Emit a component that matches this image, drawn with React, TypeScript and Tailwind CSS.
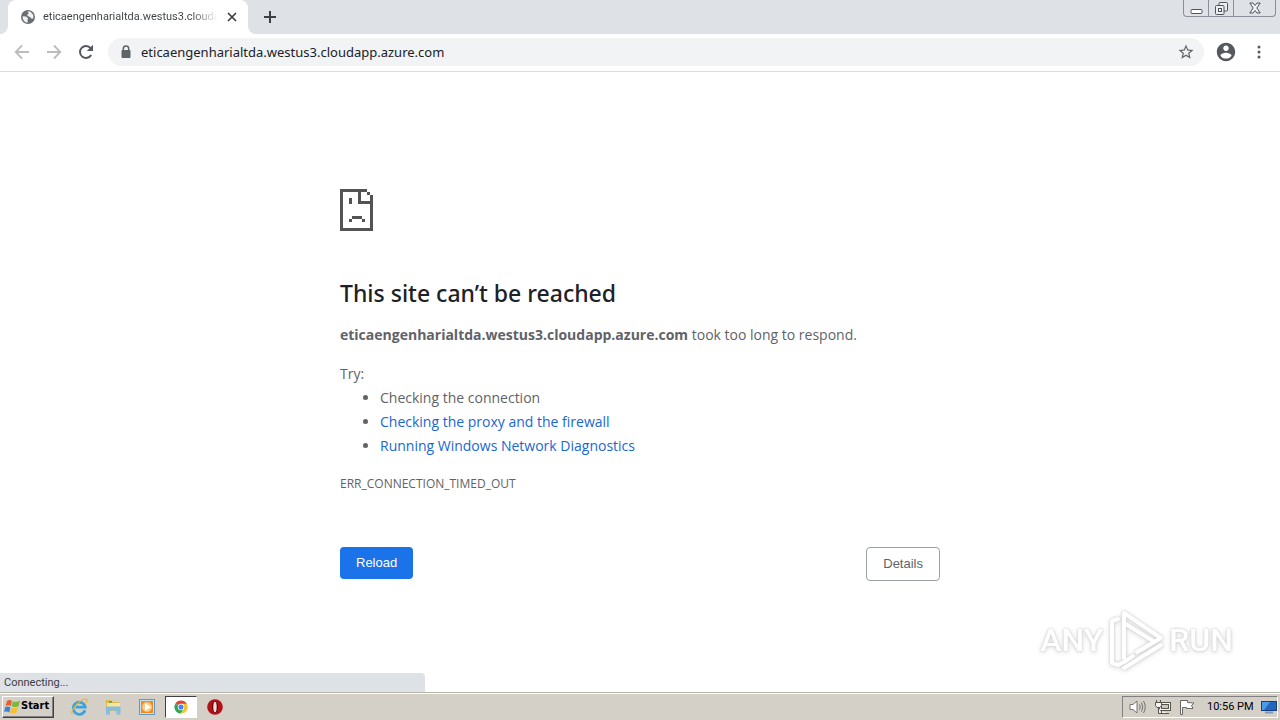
import type { ReactNode } from "react";

function GlobeIcon() {
  return (
    <svg viewBox="0 0 16 16" className="size-4 shrink-0" aria-hidden="true">
      <circle cx="8" cy="8" r="7" fill="#6a6d72" />
      <path d="M2.6 7.2 6 7.6 8.2 9.4 7.4 11 8 13.6C4.800 13.600 2.400 11 2.600 7.200ZM7.400 2.400 10.300 2.600 13.300 6 13.400 9.400 11 9.600 10 8 7.600 7 7.200 5.600 8.800 4.800Z" fill="#fff" opacity=".9" />
    </svg>
  );
}

function TabStrip() {
  return (
    <header className="flex h-[34px] items-start bg-[#dee1e6] pl-2">
      <div className="relative flex h-[34px] w-60 items-center rounded-t-lg bg-white pl-3 pr-2">
        <svg viewBox="0 0 8 8" className="absolute -left-2 bottom-0 size-2" aria-hidden="true">
          <path d="M8 0V8H0A8 8 0 0 0 8 0Z" fill="#fff" />
        </svg>
        <svg viewBox="0 0 8 8" className="absolute -right-2 bottom-0 size-2" aria-hidden="true">
          <path d="M0 0V8H8A8 8 0 0 1 0 0Z" fill="#fff" />
        </svg>
        <GlobeIcon />
        <span className="ml-[7px] w-[175px] overflow-hidden whitespace-nowrap bg-linear-to-r from-[#3c4043] from-85% to-transparent bg-clip-text font-['Roboto',sans-serif] text-[11px] leading-4 text-transparent">
          eticaengenharialtda.westus3.cloudapp.azure.com
        </span>
        <button type="button" aria-label="Close tab" className="ml-1.5 grid size-4 place-items-center">
          <svg viewBox="0 0 10 10" className="size-2.5" stroke="#3c4043" strokeWidth="1.700">
            <path d="M1 1 9 9M9 1 1 9" />
          </svg>
        </button>
      </div>
      <button type="button" aria-label="New tab" className="ml-3.5 mt-[9px] grid size-4 place-items-center">
        <svg viewBox="0 0 12 12" className="size-3" stroke="#3c4043" strokeWidth="2">
          <path d="M6 0V12M0 6H12" />
        </svg>
      </button>
      <div className="ml-auto mr-1 flex h-[17px] rounded-b border border-t-0 border-[#8b8f98]">
        <button type="button" aria-label="Minimize" className="flex w-[25px] items-center justify-center border-r border-[#8b8f98]">
          <svg viewBox="0 0 13 13" className="size-[13px]" fill="#fff" stroke="#50545c">
            <rect x="1" y="7.500" width="11" height="4" rx="1" />
          </svg>
        </button>
        <button type="button" aria-label="Restore" className="flex w-[25px] items-center justify-center border-r border-[#8b8f98]">
          <svg viewBox="0 0 13 13" className="size-[13px]" fill="#eceef2" stroke="#50545c">
            <rect x="4" y=".5" width="8.500" height="8.500" rx="1" />
            <rect x=".5" y="3.500" width="8.500" height="9" rx="1" />
            <rect x="3.500" y="6.500" width="3" height="3" />
          </svg>
        </button>
        <button type="button" aria-label="Close window" className="flex w-[41px] items-center justify-center">
          <svg viewBox="0 0 12 12" className="size-3" fill="#f3f4f7" stroke="#50545c">
            <path d="M.8 1H4L6 3.500 8 1H11.200L7.800 6 11.200 11H8L6 8.500 4 11H.8L4.200 6Z" />
          </svg>
        </button>
      </div>
    </header>
  );
}

function Toolbar() {
  return (
    <nav className="flex h-[38px] items-center border-b border-[#dadce0] bg-white pb-0.5 pl-3">
      <button type="button" aria-label="Back" className="size-5">
        <svg viewBox="0 0 20 20" fill="none" stroke="#babcbe" strokeWidth="1.800">
          <path d="M17 10H4M10 3.500 3.700 10 10 16.500" />
        </svg>
      </button>
      <button type="button" aria-label="Forward" className="ml-3 size-5">
        <svg viewBox="0 0 20 20" fill="none" stroke="#babcbe" strokeWidth="1.800">
          <path d="M3 10H16M10 3.500 16.300 10 10 16.500" />
        </svg>
      </button>
      <button type="button" aria-label="Reload page" className="ml-3 size-5">
        <svg viewBox="0 0 20 20">
          <path d="M15.200 13A6 6 0 1 1 14.600 6.100L16 7.500" fill="none" stroke="#55585c" strokeWidth="2" />
          <path d="M17 2.800V9H10.800Z" fill="#55585c" />
        </svg>
      </button>
      <div className="ml-3 flex h-7 flex-1 items-center rounded-full bg-[#f1f3f4] pl-3 pr-2">
        <svg viewBox="0 0 12 14" className="h-3.5 w-3" aria-hidden="true">
          <path d="M3.300 6V3.800A2.700 2.700 0 0 1 8.700 3.800V6" fill="none" stroke="#5f6368" strokeWidth="1.500" />
          <rect x="1.500" y="5" width="9" height="8" rx="1" fill="#5f6368" />
        </svg>
        <input
          aria-label="Address"
          defaultValue="eticaengenharialtda.westus3.cloudapp.azure.com"
          className="ml-[9px] min-w-0 flex-1 bg-transparent font-['Noto_Sans',sans-serif] text-[13px] leading-5 text-[#202124] outline-none"
        />
        <button type="button" aria-label="Bookmark" className="grid size-5 place-items-center">
          <svg viewBox="0 0 24 24" className="size-[18px]" fill="#5f6368">
            <path d="M22 9.240l-7.190-.62L12 2 9.190 8.630 2 9.240l5.460 4.730L5.820 21 12 17.270 18.180 21l-1.630-7.030L22 9.240zM12 15.400l-3.760 2.270 1-4.280-3.320-2.880 4.380-.38L12 6.100l1.710 4.040 4.380.38-3.320 2.880 1 4.280L12 15.400z" />
          </svg>
        </button>
      </div>
      <button type="button" aria-label="Profile" className="ml-[11px] size-[22px]">
        <svg viewBox="0 0 24 24" fill="#55585c">
          <path d="M12 2C6.480 2 2 6.480 2 12s4.480 10 10 10 10-4.480 10-10S17.520 2 12 2zm0 3c1.660 0 3 1.340 3 3s-1.340 3-3 3-3-1.340-3-3 1.340-3 3-3zm0 14.200c-2.500 0-4.710-1.280-6-3.220.030-1.990 4-3.080 6-3.080 1.990 0 5.970 1.090 6 3.080-1.290 1.940-3.500 3.220-6 3.220z" />
        </svg>
      </button>
      <button type="button" aria-label="Menu" className="ml-3 mr-[11px] size-5">
        <svg viewBox="0 0 20 20" fill="#55585c">
          <circle cx="10" cy="5" r="1.500" />
          <circle cx="10" cy="10" r="1.500" />
          <circle cx="10" cy="15" r="1.500" />
        </svg>
      </button>
    </nav>
  );
}

function SadPage() {
  return (
    <svg viewBox="0 0 33 42" className="h-[42px] w-[33px]" fill="#535353" shapeRendering="crispEdges" aria-hidden="true">
      <path d="M0 0H27V3H3V39H30V15H18V0H21V12H30V6H33V42H0ZM27 3H30V6H27ZM9 9H12V15H9ZM12 27H22V30H12ZM9 30H12V33H9ZM22 30H25V33H22Z" />
    </svg>
  );
}

function Watermark() {
  return (
    <div className="absolute bottom-5 right-[47px] flex items-center gap-1 font-['Roboto',sans-serif] text-[32px] font-medium leading-none text-white [filter:drop-shadow(0_0_1px_#ccc)_drop-shadow(0_1px_2px_#ddd)]">
      <span>ANY</span>
      <svg viewBox="0 0 58 64" className="h-16 w-[58px]" fill="none" stroke="#fff" strokeWidth="4" strokeLinejoin="round" strokeLinecap="round" aria-hidden="true">
        <path d="M17 50V5L54 30 30 44M17 15 46 33M11 11 5 13V55L11 57 17 54 26 48" />
        <path d="M17 60 54 37" />
      </svg>
      <span>RUN</span>
    </div>
  );
}

function ErrorPage() {
  return (
    <main className="relative flex-1 bg-white px-6 pt-[117px] font-['Open_Sans',sans-serif] text-[#5f6368]">
      <div className="mx-auto max-w-[600px]">
        <SadPage />
        <h1 className="mt-12 font-['Noto_Sans',sans-serif] text-[23px] font-medium leading-7 text-[#202124]">This site can’t be reached</h1>
        <div className="text-[14px] leading-6">
          <p className="mt-4">
            <strong className="font-bold">eticaengenharialtda.westus3.cloudapp.azure.com</strong> took too long to respond.
          </p>
          <p className="mt-[15px]">Try:</p>
          <ul className="list-disc pl-10">
            <li>Checking the connection</li>
            <li><a href="#proxy" className="text-[#1967d2]">Checking the proxy and the firewall</a></li>
            <li><a href="#diagnostics" className="text-[#1967d2]">Running Windows Network Diagnostics</a></li>
          </ul>
        </div>
        <p className="mt-4 text-[12px] leading-5">ERR_CONNECTION_TIMED_OUT</p>
        <div className="mt-[53px] flex items-start justify-between font-['Liberation_Sans',sans-serif] text-[13px]">
          <button type="button" className="h-8 rounded bg-[#1a73e8] px-4 text-white">Reload</button>
          <button type="button" className="h-[34px] rounded border border-[#9aa0a6] px-4">Details</button>
        </div>
      </div>
      <Watermark />
      <div role="status" className="absolute bottom-0 left-0 h-[19px] w-[425px] max-w-full rounded-tr bg-[#dee1e6] pl-1 font-['Roboto',sans-serif] text-[11px] leading-5 text-[#3c4043]">
        Connecting...
      </div>
    </main>
  );
}

function TaskButton({ label, active, children }: { label: string; active?: boolean; children: ReactNode }) {
  return (
    <button
      type="button"
      aria-label={label}
      className={
        active
          ? "grid h-[22px] w-8 place-items-center border border-b-white border-l-[#404040] border-r-white border-t-[#404040] bg-white"
          : "grid h-[22px] w-8 place-items-center"
      }
    >
      {children}
    </button>
  );
}

function Taskbar() {
  return (
    <footer className="flex h-7 items-center border-t border-[#b5b2aa] bg-[#d4d0c8] pl-0.5 pr-0.5 font-['Noto_Sans',sans-serif] text-black shadow-[inset_0_1px_0_#fff]">
      <button type="button" className="flex h-[22px] w-[52px] items-center gap-px border border-b-[#404040] border-l-white border-r-[#404040] border-t-white pl-px font-['DejaVu_Sans_Condensed','DejaVu_Sans',sans-serif] text-[11px] font-bold shadow-[inset_-1px_-1px_0_#808080]">
        <svg viewBox="0 0 16 16" className="size-4 shrink-0" aria-hidden="true">
          <path d="M3 2C5 .5 6.500 1 8 2L6.700 7.200C5 6 3.500 6 1.500 7Z" fill="#e8612c" />
          <path d="M9 2.200C11 3.300 13 3 16 1.800L14.400 7.200C12 8.300 10 8.500 7.700 7.300Z" fill="#78b83a" />
          <path d="M1.200 8.200C3 7.300 5 7.400 6.400 8.500L5.200 13.500C3.500 12.300 2 12.400 0 13Z" fill="#3b82d0" />
          <path d="M7.400 8.700C9.500 9.700 11.500 9.400 14 8.300L12.400 13.500C10 14.800 8 14.500 6.100 13.800Z" fill="#f5c02c" />
        </svg>
        Start
      </button>
      <div className="ml-[9px] flex gap-0.5">
        <TaskButton label="Internet Explorer">
          <svg viewBox="0 0 18 18" className="size-[18px]" fill="none">
            <path d="M15 12.200A6 6 0 1 1 15.200 9.200H5.500" stroke="#3aa3df" strokeWidth="2.800" />
            <path d="M2.300 16.500C-.5 12.500 12-.5 16.300 1.300 17.500 2 17 3.500 16 5" stroke="#e6b83a" strokeWidth="1.200" />
          </svg>
        </TaskButton>
        <TaskButton label="File Explorer">
          <svg viewBox="0 0 18 18" className="size-[18px]">
            <path d="M2 2H7L8 4H15.500V13H2Z" fill="#dfb94e" />
            <path d="M3 5H16V12H3Z" fill="#f8e49a" />
            <path d="M2 9.500Q2 8.500 3 8.500H15.500Q16.500 8.500 16.500 9.500V16.500H12.500V12.500H6V16.500H2Z" fill="#83bde0" />
            <path d="M5 3H8V5H5Z" fill="#66aa55" />
          </svg>
        </TaskButton>
        <TaskButton label="Media Player">
          <svg viewBox="0 0 18 18" className="size-[18px]">
            <rect x="1.500" y="1.500" width="15" height="15" fill="#c9e2f5" stroke="#5d9acb" />
            <rect x="3" y="3" width="12" height="12" fill="#f08a18" />
            <circle cx="9" cy="9" r="5" fill="#f9c987" />
            <path d="M7 5 13 9 7 13Z" fill="#fff" />
          </svg>
        </TaskButton>
        <TaskButton label="Chrome" active>
          <svg viewBox="0 0 16 16" className="size-3.5">
            <path d="M8 8 1.500 4.200A7.500 7.500 0 0 1 14.500 4.200Z" fill="#e04535" />
            <path d="M8 8 1.500 4.200A7.500 7.500 0 0 0 8 15.500L11 10Z" fill="#33a653" />
            <path d="M8 4.200H14.500A7.500 7.500 0 0 1 8 15.500L11.300 10Z" fill="#f9c22b" />
            <circle cx="8" cy="8" r="3.700" fill="#fff" />
            <circle cx="8" cy="8" r="2.900" fill="#4285f4" />
          </svg>
        </TaskButton>
        <TaskButton label="Opera">
          <svg viewBox="0 0 16 16" className="size-4">
            <circle cx="8" cy="8" r="7.800" fill="#b50f18" />
            <ellipse cx="8" cy="8" rx="3" ry="6" fill="#5a0508" />
            <ellipse cx="8" cy="8" rx="1.700" ry="5.300" fill="#f5dada" />
          </svg>
        </TaskButton>
      </div>
      <div className="ml-auto flex h-[22px] items-center gap-2 border border-b-white border-l-[#808080] border-r-white border-t-[#808080] pl-1.5">
        <svg viewBox="0 0 18 16" className="h-4 w-[18px]" fill="#fff" stroke="#74736f" aria-label="Volume">
          <path d="M1 5.500H4L8 2V14L4 10.500H1Z" />
          <path d="M10.500 5.500Q12 8 10.500 10.500M12.500 3.500Q15 8 12.500 12.500M14.500 2Q18 8 14.500 14" fill="none" />
        </svg>
        <svg viewBox="0 0 16 16" className="size-4" fill="#f4f3f0" stroke="#55544f" aria-label="Network">
          <rect x="4.500" y="3.500" width="11" height="8" />
          <rect x="6.500" y="5.500" width="7" height="4" fill="#c9c6bf" />
          <path d="M6.500 12V14.500H14M1.500 1V3M5.500 1V3M.5 3.500H6.500V6.500L5 8.500H2L.5 6.500ZM3.500 8.500V14.500H7" />
        </svg>
        <svg viewBox="0 0 16 16" className="size-4" fill="#fff" stroke="#686762" aria-label="Action Center">
          <path d="M1.500 15.500V1.500H8.500V3.500L15 4 12.500 6.500 14 9.500H7.500V8.500H3.500V15.500Z" />
        </svg>
        <time className="ml-1 w-[46px] whitespace-nowrap font-['Roboto',sans-serif] text-[11px] leading-4">10:56 PM</time>
        <svg viewBox="0 0 16 14" className="h-3.5 w-4" aria-label="Show desktop">
          <rect x=".5" y="1.500" width="15" height="9" fill="#2466bd" stroke="#173f7c" />
          <path d="M1 2H9L3 10H1Z" fill="#4d9be8" />
          <path d="M4 12.500H12" stroke="#7b98be" strokeWidth="2" />
        </svg>
      </div>
    </footer>
  );
}

export default function App() {
  return (
    <div className="flex min-h-screen flex-col">
      <TabStrip />
      <Toolbar />
      <ErrorPage />
      <Taskbar />
    </div>
  );
}
